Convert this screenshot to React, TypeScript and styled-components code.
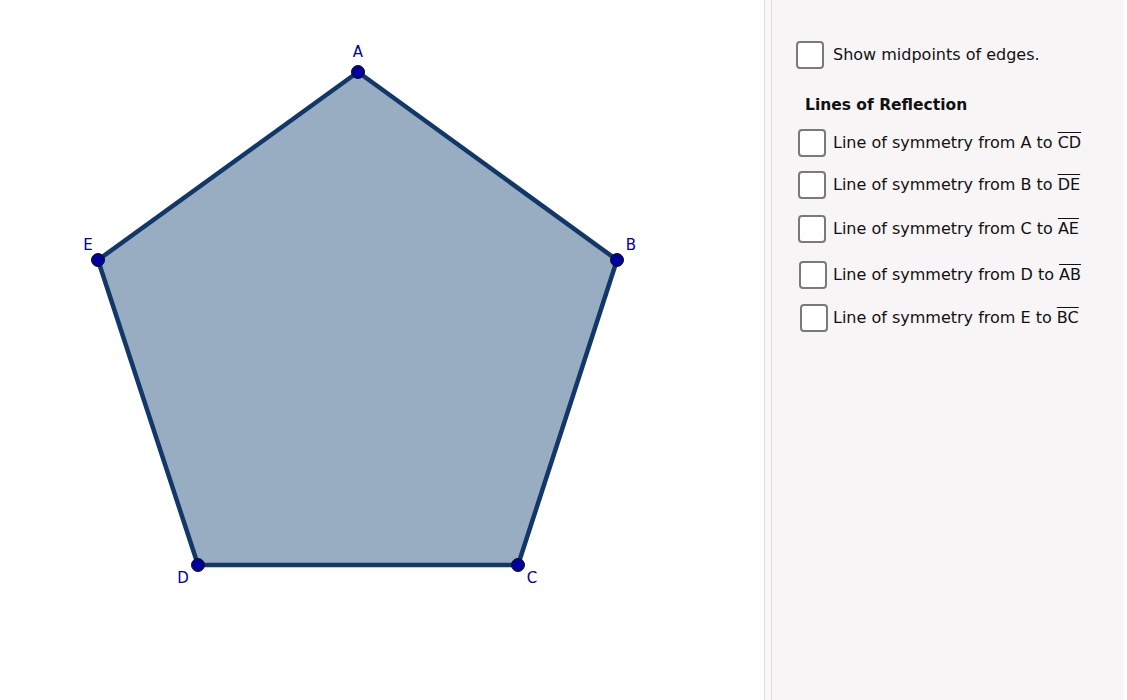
import styled, { createGlobalStyle } from 'styled-components';

const GlobalStyle = createGlobalStyle`
  html, body {
    margin: 0;
    padding: 0;
    background: #ffffff;
    font-family: "DejaVu Sans", "Liberation Sans", Arial, sans-serif;
  }
`;

interface Vertex {
  name: string;
  x: number;
  y: number;
  lx: number;
  ly: number;
}

const vertices: Vertex[] = [
  { name: 'A', x: 358, y: 72, lx: 358, ly: 57 },
  { name: 'B', x: 617, y: 260, lx: 631, ly: 250 },
  { name: 'C', x: 518, y: 565, lx: 532, ly: 583 },
  { name: 'D', x: 198, y: 565, lx: 183, ly: 583 },
  { name: 'E', x: 98, y: 260, lx: 88, ly: 250 },
];

const symmetryLines = [
  { from: 'A', to: 'CD', top: 12, shift: 2 },
  { from: 'B', to: 'DE', top: 14, shift: 2 },
  { from: 'C', to: 'AE', top: 16, shift: 2 },
  { from: 'D', to: 'AB', top: 18, shift: 3 },
  { from: 'E', to: 'BC', top: 15, shift: 4 },
];

export default function App() {
  const polygon = vertices.map((v) => `${v.x},${v.y}`).join(' ');

  return (
    <>
      <GlobalStyle />
      <Page>
        <Canvas>
          <svg width="764" height="700" viewBox="0 0 764 700">
            <polygon
              points={polygon}
              fill="#99adc2"
              stroke="#12386a"
              strokeWidth={4.5}
              strokeLinejoin="round"
            />
            {vertices.map((v) => (
              <g key={v.name}>
                <circle cx={v.x} cy={v.y} r={6.5} fill="#00009c" stroke="#111" strokeWidth={1} />
                <text
                  x={v.lx}
                  y={v.ly}
                  fill="#0000a0"
                  fontSize={15}
                  fontFamily="'DejaVu Sans', Arial, sans-serif"
                  textAnchor="middle"
                >
                  {v.name}
                </text>
              </g>
            ))}
          </svg>
        </Canvas>
        <Divider />
        <Panel>
          <CheckRow $top={41} $shift={0}>
            <Box />
            <Label>Show midpoints of edges.</Label>
          </CheckRow>
          <Heading>Lines of Reflection</Heading>
          {symmetryLines.map((line) => (
            <CheckRow key={line.from} $top={line.top} $shift={line.shift}>
              <Box />
              <Label>
                Line of symmetry from {line.from} to <Segment>{line.to}</Segment>
              </Label>
            </CheckRow>
          ))}
        </Panel>
        <Edge />
      </Page>
    </>
  );
}

const Page = styled.div`
  display: flex;
  width: 1127px;
  height: 700px;
  overflow: hidden;
`;

const Canvas = styled.div`
  width: 764px;
  height: 700px;
  flex-shrink: 0;
  background: #ffffff;

  svg {
    display: block;
  }
`;

const Divider = styled.div`
  width: 6px;
  flex-shrink: 0;
  background: #f9f8f9;
  border-left: 1px solid #dedcde;
  border-right: 1px solid #dedcde;
`;

const Panel = styled.div`
  flex: 1;
  background: #f7f5f6;
  padding: 0 0 0 24px;
  display: flex;
  flex-direction: column;
`;

const Edge = styled.div`
  width: 3px;
  flex-shrink: 0;
  background: #ffffff;
`;

const CheckRow = styled.label<{ $top: number; $shift: number }>`
  display: flex;
  align-items: center;
  margin-top: ${(p) => p.$top}px;
  cursor: pointer;

  & > span:first-child {
    margin-left: ${(p) => p.$shift}px;
    margin-right: ${(p) => 9 - p.$shift}px;
  }
`;

const Box = styled.span`
  width: 24px;
  height: 24px;
  flex-shrink: 0;
  border: 2px solid #7a7a7a;
  border-radius: 4px;
  background: #ffffff;
`;

const Label = styled.span`
  font-size: 16px;
  color: #111111;
  line-height: 28px;
  white-space: nowrap;
`;

const Segment = styled.span`
  text-decoration: overline;
`;

const Heading = styled.div`
  font-size: 15.5px;
  font-weight: bold;
  color: #111111;
  margin: 24px 0 0 9px;
  line-height: 24px;
`;
